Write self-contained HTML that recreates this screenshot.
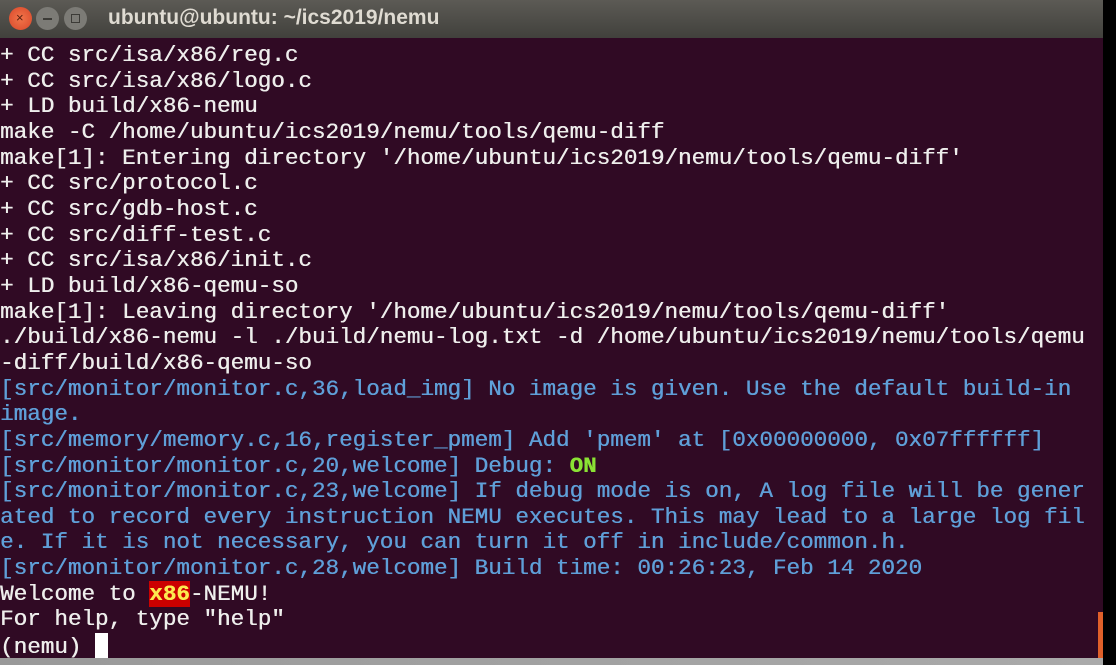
<!DOCTYPE html>
<html><head><meta charset="utf-8"><style>
body{margin:0;width:1116px;height:665px;background:#000;overflow:hidden;position:relative;font-family:"Liberation Sans",sans-serif}
#title{position:absolute;left:0;top:0;width:1103px;height:38px;background:linear-gradient(#5c5a55,#41413c);}
#title .t{position:absolute;left:108px;top:6px;color:#dfdbd2;font-weight:bold;font-size:21px}
.b{position:absolute;top:7px;width:23px;height:23px;border-radius:50%}
#term{position:absolute;left:0;top:38px;width:1103px;height:620px;background:#300a24}
pre{position:absolute;left:0;top:5px;margin:0;font-family:"Liberation Mono",monospace;font-size:22.6px;line-height:25.65px;color:#eeeeec;text-shadow:0.4px 0 0 currentColor}
.bl{color:#5f9fd8}.g{color:#8ae234;font-weight:bold}
.x{background:#cc0000;color:#fce94f;font-weight:bold}
.cur{display:inline-block;width:13px;height:25px;background:#fff;vertical-align:-5px}
#bot{position:absolute;left:0;top:658px;width:1103px;height:7px;background:linear-gradient(90deg,#999,#aaa)}
#sb{position:absolute;left:1098px;top:612px;width:5px;height:46px;background:#e0602a}
</style></head><body>
<div id="title">
<div class="b" style="left:9px;background:radial-gradient(#f2754a,#d8472a)"><span style="position:absolute;left:7px;top:3px;font-size:13px;color:#5a2010">×</span></div>
<div class="b" style="left:36px;background:#7c7b76"><span style="position:absolute;left:7px;top:11px;width:9px;height:2px;background:#3c3b37"></span></div>
<div class="b" style="left:64px;background:#7c7b76"><span style="position:absolute;left:7px;top:7px;width:7px;height:7px;border:1px solid #3c3b37"></span></div>
<div class="t">ubuntu@ubuntu: ~/ics2019/nemu</div>
</div>
<div id="term"><pre>+ CC src/isa/x86/reg.c
+ CC src/isa/x86/logo.c
+ LD build/x86-nemu
make -C /home/ubuntu/ics2019/nemu/tools/qemu-diff
make[1]: Entering directory '/home/ubuntu/ics2019/nemu/tools/qemu-diff'
+ CC src/protocol.c
+ CC src/gdb-host.c
+ CC src/diff-test.c
+ CC src/isa/x86/init.c
+ LD build/x86-qemu-so
make[1]: Leaving directory '/home/ubuntu/ics2019/nemu/tools/qemu-diff'
./build/x86-nemu -l ./build/nemu-log.txt -d /home/ubuntu/ics2019/nemu/tools/qemu
-diff/build/x86-qemu-so
<span class="bl">[src/monitor/monitor.c,36,load_img] No image is given. Use the default build-in
image.
[src/memory/memory.c,16,register_pmem] Add 'pmem' at [0x00000000, 0x07ffffff]
[src/monitor/monitor.c,20,welcome] Debug: <span class="g">ON</span>
[src/monitor/monitor.c,23,welcome] If debug mode is on, A log file will be gener
ated to record every instruction NEMU executes. This may lead to a large log fil
e. If it is not necessary, you can turn it off in include/common.h.
[src/monitor/monitor.c,28,welcome] Build time: 00:26:23, Feb 14 2020</span>
Welcome to <span class="x">x86</span>-NEMU!
For help, type "help"
(nemu) <span class="cur"></span></pre></div>
<div id="sb"></div>
<div id="bot"></div>
</body></html>
